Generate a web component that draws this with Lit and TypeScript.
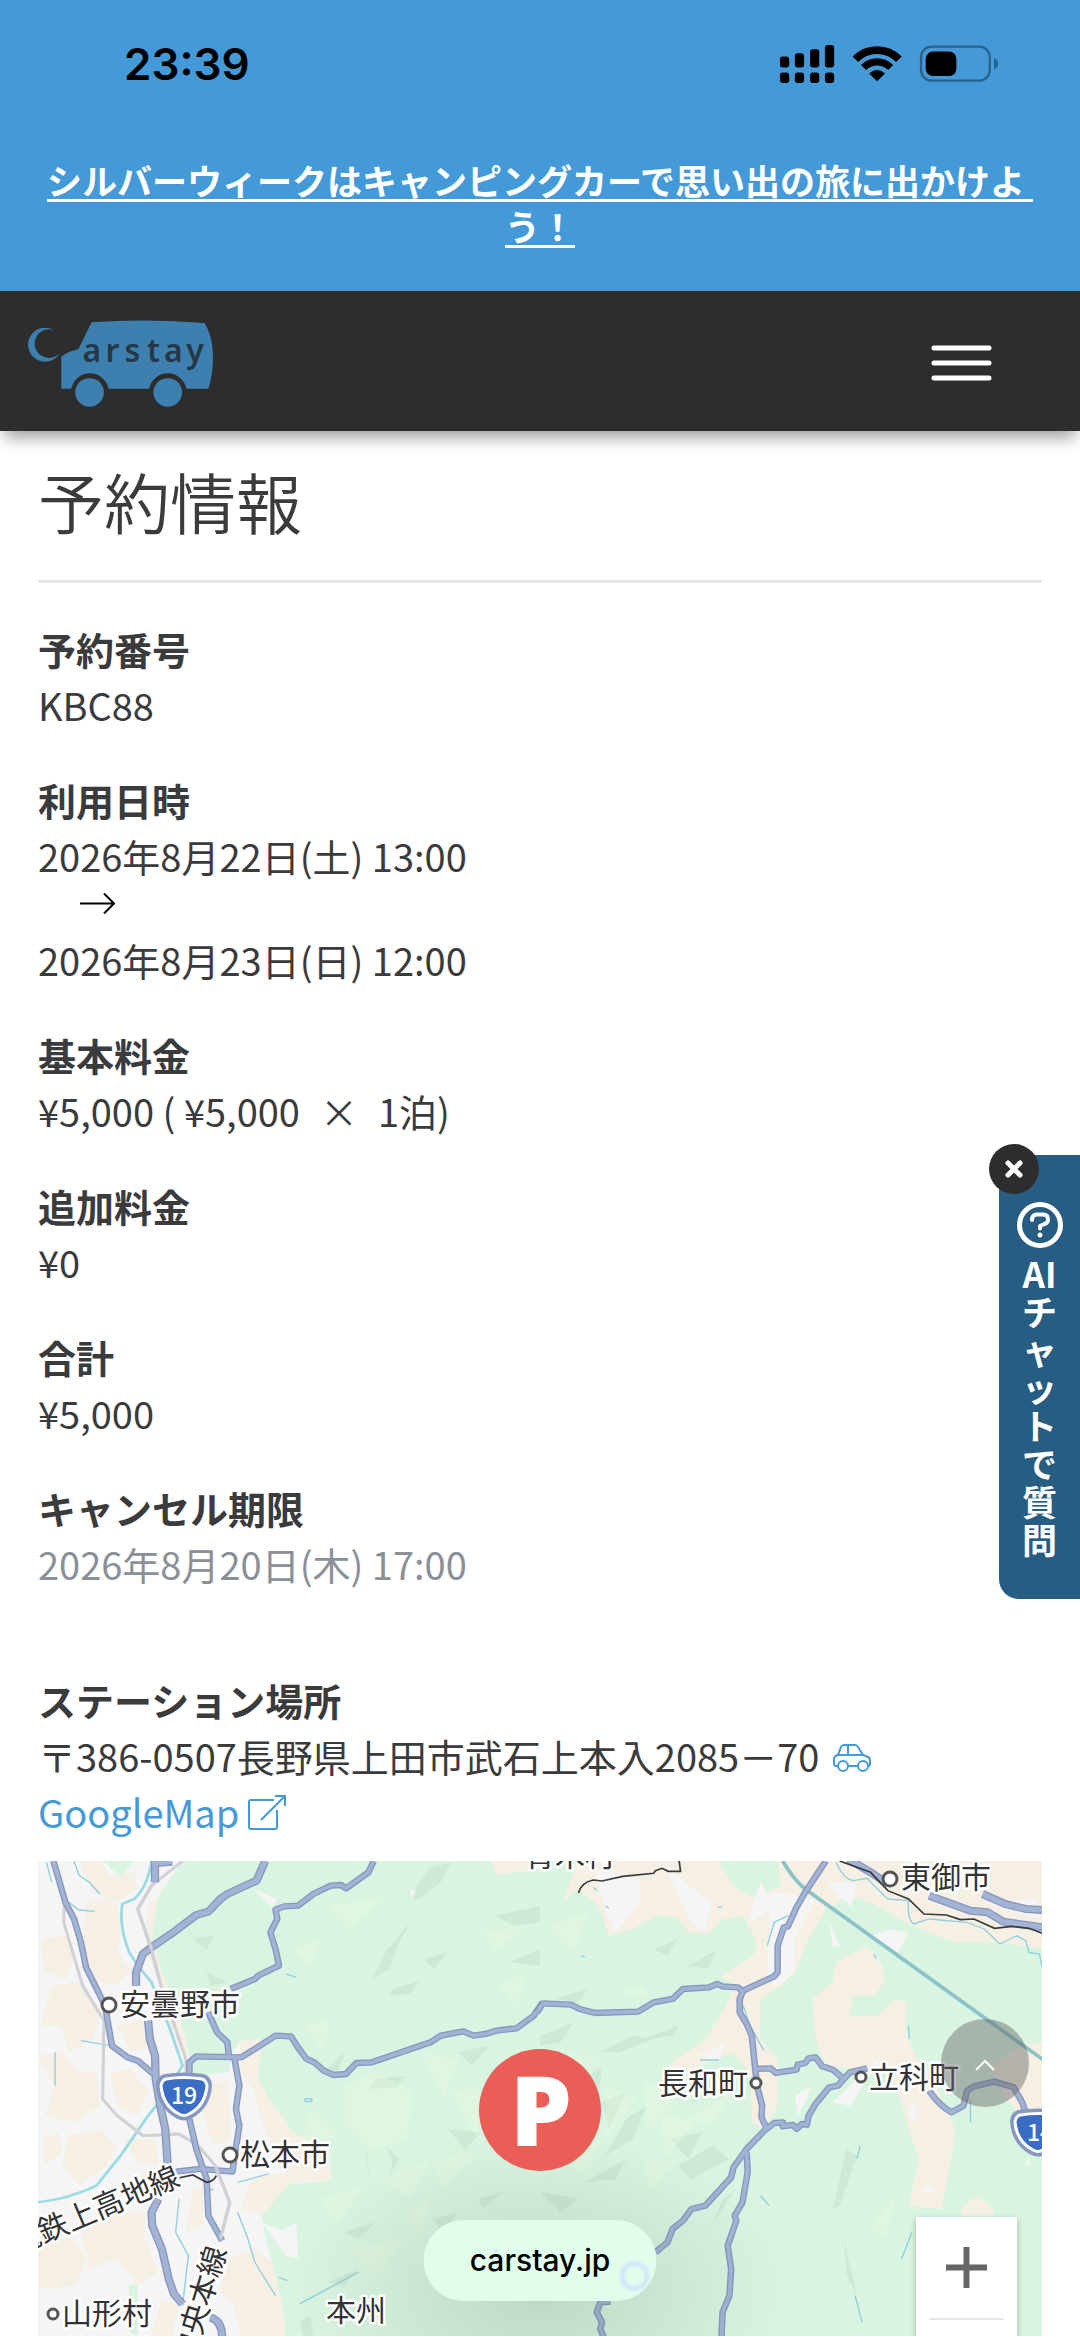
import { LitElement, html, svg, css } from 'lit';
import { customElement, property } from 'lit/decorators.js';

const RESERVATION = {
  code: 'KBC88',
  start: '2026年8月22日(土) 13:00',
  end: '2026年8月23日(日) 12:00',
  price: '¥5,000',
  nights: '1泊',
  extraPrice: '¥0',
  total: '¥5,000',
  cancelLimit: '2026年8月20日(木) 17:00',
  address: '〒386-0507長野県上田市武石上本入2085－70',
};

// Road geometry, one list per map tile
const WEST_ROADS = [
  'M155 66L190 190 215 240 235 310 250 385 305 500 325 620 370 655 400 665 445 705',
  'M1085 66L1070 100 1005 148 990 138 960 140 910 165 865 200 825 202 800 212 805 240 785 280 800 330 810 380 750 410 740 420 670 450',
  'M605 520L630 580 660 610 665 655',
  'M550 730L550 670 570 652 700 655 740 630 800 590 845 592 865 625 890 660 915 672 940 695 968 708 1005 705 1035 672 1080 670 1250 610 1280 590 1345 577 1375 590 1410 585 1440 575 1500 568 1550 530 1575 490',
  'M680 655L695 740 685 810 695 860 680 960 675 998 580 990 510 998',
  'M550 840L570 930 600 1020 605 1130 645 1205',
];
const WEST_HIGHWAYS = [
  'M770 66L745 125 660 165 640 180 605 218 570 228 510 275 440 325 415 345 395 400 395 440',
  'M430 545L435 600 450 650 452 720 465 800 480 870 487 980',
  'M460 1080L440 1120 442 1160 470 1230 490 1320 505 1365 530 1395',
  'M610 1435Q645 1445 645 1495',
  'M450 66L450 130M450 72L500 68',
];
const EAST_ROADS = [
  'M830 66L770 160 745 205 720 262 708 265 690 320 690 400 680 412 590 455 580 480 580 520 600 555 615 590 625 690 630 740 645 800 643 835 658 868 600 930 562 985 555 1015 480 1100 440 1110 415 1145 385 1170 370 1210 335 1240',
  'M600 940L603 1000 588 1090 565 1130 570 1145 545 1220 555 1290 550 1370 530 1420 527 1495',
  'M-8 520L8 493 90 497 115 510 160 522 285 518 330 490 385 480 415 450 490 445 515 435 530 442 575 445 590 460',
  'M625 690L670 688 685 702 745 692 748 677 770 672 780 658 800 655 820 682 850 692 882 720 900 700 950 688',
  'M882 720L865 740 840 745 800 795 780 830 775 858 760 855 745 870 735 858 705 862 705 850 680 852 655 872',
  'M1130 755Q1160 800 1195 820L1230 800 1240 755 1260 742 1320 728 1375 745 1400 790 1412 825',
  'M205 1388L175 1390 165 1420 180 1450 175 1470 185 1495',
];
const EAST_HIGHWAYS = [
  'M895 60L960 100 1010 135',
  'M1130 170L1250 215 1300 220 1345 248 1460 265',
  'M1285 165L1350 195 1410 210 1460 213',
];

const LABELS = [
  { text: '安曇野市', x: 82, y: 154, dotX: 71, dotY: 144, r: 7 },
  { text: '松本市', x: 202, y: 304, dotX: 192, dotY: 294, r: 7 },
  { text: '山形村', x: 24, y: 463, dotX: 15, dotY: 453, r: 5 },
  { text: '長和町', x: 620, y: 233, dotX: 718, dotY: 222, r: 5 },
  { text: '立科町', x: 831, y: 227, dotX: 823, dotY: 216, r: 5 },
  { text: '東御市', x: 863, y: 27, dotX: 852, dotY: 18, r: 7 },
];

@customElement('station-map')
export class StationMap extends LitElement {
  static styles = css`
    :host {
      display: block;
      position: relative;
      height: 475px;
      overflow: hidden;
      background: #daf4e2;
      font-family: 'Noto Sans CJK JP', sans-serif;
    }

    .canvas {
      display: block;
      width: 100%;
      height: 100%;
    }

    .plain {
      fill: #f5f5f5;
    }

    .field {
      fill: #f5efe4;
    }

    .green {
      fill: #daf4e2;
    }

    .ridge {
      fill: #bcdac6;
      opacity: 0.4;
    }

    .slope {
      fill: #e8fade;
      opacity: 0.35;
    }

    .road {
      fill: none;
      stroke: #8797bf;
      stroke-width: 19;
      stroke-linejoin: round;
    }

    .road-core {
      fill: none;
      stroke: #a3b3d4;
      stroke-width: 11;
      stroke-linejoin: round;
    }

    .highway {
      stroke-width: 24;
    }

    .highway-core {
      stroke-width: 16;
    }

    .street {
      fill: none;
      stroke: #d0d0d6;
      stroke-width: 9;
    }

    .river {
      fill: none;
      stroke: #99dbe4;
      stroke-width: 8;
    }

    .stream {
      fill: none;
      stroke: #8fd0de;
      stroke-width: 4;
    }

    .express {
      fill: none;
      stroke: #8cc3c8;
      stroke-width: 11;
    }

    .rail {
      fill: none;
      stroke: #3a3a3a;
      stroke-width: 5;
    }

    .label {
      fill: #333;
      stroke: #fff;
      stroke-width: 5px;
      stroke-linejoin: round;
      paint-order: stroke;
      font-size: 30px;
    }

    .town {
      fill: #fff;
      stroke: #555;
      stroke-width: 3;
    }

    .shield-text {
      fill: #fff;
      font-size: 23px;
      font-weight: 500;
    }

    .marker-text {
      fill: #fff;
      font-family: 'Open Sans', sans-serif;
      font-size: 98px;
      font-weight: 800;
      text-anchor: middle;
    }

    .zoom {
      position: absolute;
      top: 356px;
      right: 25px;
      width: 101px;
      background: #fff;
      box-shadow: 0 2px 6px rgba(0, 0, 0, 0.25);
    }

    .zoom button {
      display: grid;
      place-items: center;
      width: 100%;
      height: 101px;
      padding: 0;
      border: 0;
      background: none;
    }

    .zoom hr {
      margin: 0 13px;
      border: 0;
      border-top: 2px solid #e6e6e6;
    }
  `;

  _renderRoads(roads: string[], highways: string[]) {
    return svg`
      ${roads.map((d) => svg`<path class="road" d=${d} />`)}
      ${highways.map((d) => svg`<path class="road highway" d=${d} />`)}
      ${roads.map((d) => svg`<path class="road-core" d=${d} />`)}
      ${highways.map((d) => svg`<path class="road-core highway-core" d=${d} />`)}
    `;
  }

  _renderWest() {
    return svg`
      <path class="plain" d="M100 60H1570V1495H100Z" />
      <path class="field" d="M230 66H290L320 110 390 100 400 150 340 190 270 160ZM120 300L190 290 215 360 190 420 130 400ZM250 190L330 180 360 260 340 330 380 400 330 440 280 420 240 330ZM150 440L240 430 290 530 270 600 200 640 180 560 120 560ZM340 560L420 540 440 620 380 640ZM110 650L180 640 230 700 280 700 290 800 220 850 130 830 160 740ZM320 700L380 690 430 760 400 830 340 800ZM200 890L290 870 340 920 310 980 230 1040 180 980ZM130 900L170 880 180 940 130 980ZM360 900L450 900 460 980 400 970ZM230 1160L320 1130 420 1120 420 1200 460 1300 400 1340 340 1260 260 1290ZM110 1220L210 1190 250 1260 220 1340 110 1350ZM430 200L460 170 440 300 470 400 510 500 540 600 555 650 520 640 490 560 500 500 460 420 420 330ZM560 1050L590 1050 590 1160 540 1180ZM700 605L760 600 760 700 800 790 900 870 960 930 960 1025 850 1030 770 1130 700 1110 730 1020 830 1000 770 880 740 760 700 700ZM600 740L660 720 670 900 620 920 580 800ZM660 1260L740 1230 800 1280 830 1491H700L680 1400 640 1360ZM470 1380L520 1400 500 1491H440Z" />
      <path class="green" d="M530 66H1570V1495H830L820 1400 795 1290 770 1190 760 1130 840 1035 960 1025V930L850 880 820 830 780 780 750 720 760 600 700 605 672 640 665 700 560 712 540 600 510 500 470 400 440 300 460 170ZM300 66H390L350 115ZM375 1340L400 1335 400 1491 375 1480Z" />
      <path class="field" d="M1425 66H1570V90L1440 108Z" />
      <path class="plain" d="M735 150L805 180 790 205ZM760 1150L820 1175 860 1150 865 1258 830 1250ZM1190 150L1210 160 1195 170Z" />
      <path class="ridge" d="M1250 85L1310 70 1280 130 1200 190 1210 140ZM1190 250L1150 330 1130 390 1080 420 1120 340ZM1140 450L1220 425 1190 465 1130 470ZM1090 720L1180 710 1150 745 1075 750ZM1300 870L1400 880 1350 930ZM1440 230L1568 200 1568 250 1490 260ZM1480 370L1568 330 1568 380ZM1230 360L1300 340 1260 390ZM1330 640L1420 620 1370 680ZM1080 920Q1050 960 1075 1010L1060 950ZM1120 920Q1150 970 1130 1010L1160 960ZM1390 1080L1460 1060 1400 1110ZM1000 1180L1090 1150 1040 1200ZM950 1330L1040 1290 1000 1340ZM1260 1140L1330 1120 1280 1180ZM870 1450L900 1430 910 1491H880ZM950 690L1000 640 980 700ZM560 300L620 290 600 330ZM600 400L660 430 610 440Z" />
      <path class="slope" d="M1000 740L1090 700 1200 760 1180 900 1080 940 1000 860ZM1220 640L1330 660 1290 780ZM1310 760L1390 740 1390 900ZM1400 280L1530 260 1440 340ZM1450 440L1530 400 1500 500ZM900 800L980 880 900 990 880 900ZM1100 1020L1250 960 1190 1080ZM930 1080L1060 1040 980 1150ZM1250 960L1380 940 1290 1050ZM850 330L930 300 900 390ZM950 200L1120 170 1020 270ZM1180 1130L1260 1060 1220 1190ZM880 560L960 540 940 640ZM1020 1230L1170 1200 1090 1320Z" />
      <path class="river" d="M440 66Q430 140 390 180L355 195Q345 260 375 340L400 380 440 430 490 560 530 680 470 780 430 830 350 950 280 1040Q200 1080 110 1090" />
      <path class="stream" d="M215 66L230 110 260 130 290 165M180 175L230 213 275 217M135 70L150 130M520 1080L510 1180 547 1250 530 1400M600 1060L620 1050M690 1120L720 1200 740 1270 800 1370M690 1030L780 1005M160 640V740M235 605L320 620M1040 1300L870 1395M810 1315L835 1325M830 405L860 415M885 780H905V788H887Z" />
      <path class="street" d="M155 66L187 190 185 250 240 440 302 545 298 780 340 830 415 890 520 885 575 920 625 980 667 1090 640 1200M530 66L440 140 400 210 435 320 470 450M500 540L540 660V710M550 840L570 930" />
      ${this._renderRoads(WEST_ROADS, WEST_HIGHWAYS)}
      <path class="street" d="M440 140L400 210 440 330 470 450M625 980L667 1090 640 1200" />
      <path class="rail" d="M515 1018L560 1008 600 1030Q620 1028 628 1010" />
    `;
  }

  _renderEast() {
    return svg`
      <path class="field" d="M110 66H520L560 140 620 175 700 140 690 66H1460V330L1330 310 1200 310 1060 250 960 190 900 170 830 210 780 300 740 400 700 440 640 480V600L690 660V800L650 870 615 850 610 700 560 640 440 690 370 680 480 600 540 500 565 440 525 410 620 350 630 310 590 230 530 240 490 285 430 280 400 235 340 230 270 270 200 290 170 200 110 150 65 190Z" />
      <path class="field" d="M950 320L995 380 1000 430 970 468 910 470 900 530 980 530 1030 480 1065 490 1060 560 1090 650 1130 700 1205 870 1200 930 1165 1110 1070 1100 1100 960 1080 900 1040 760 1000 700 830 680 800 600 790 480 850 430 860 370ZM1310 680L1400 620 1460 610V820L1400 840 1340 760ZM1220 1120Q1260 1040 1315 1110V1130H1225Z" />
      <path class="plain" d="M160 90L290 120 290 190 220 280 190 220ZM360 66L430 140 500 190 480 275 440 250 400 170ZM670 160L800 180 740 300 740 400 690 445 660 420ZM830 130L920 130 905 205ZM840 250L870 320 850 325ZM460 650L540 610 520 670ZM640 130L680 200 600 260ZM960 290L1020 270 1070 280 1040 340ZM1190 90L1240 80 1220 140ZM1290 190L1440 180 1450 240ZM1070 820L1090 780 1095 840 1080 850ZM1110 1060L1130 1030 1150 1060ZM850 790L1000 640 900 800ZM740 770L790 740 750 830ZM1410 980L1420 950 1425 975Z" />
      <path class="ridge" d="M0 590L100 550 60 610 0 620ZM170 640L270 590 330 600 230 640ZM430 380L510 335 490 390ZM300 600L400 560 390 590ZM40 480L140 450 110 490ZM330 330L400 300 370 350ZM120 730L180 680 170 770ZM180 790L250 760 200 870ZM250 840L310 800 270 900 190 950ZM380 900L470 880 430 960ZM130 1030L250 960 220 1020ZM400 980L500 920 550 960 440 1020ZM430 800L520 700 500 760ZM30 880L80 850 40 960ZM560 1060L500 1160 530 1080ZM0 1060L110 1080 60 1120Z" />
      <path class="slope" d="M190 740L280 780 190 900ZM300 720L400 790 310 880ZM220 460L300 440 320 480ZM350 820L450 850 360 960ZM60 960L180 900 130 1010ZM420 840L560 760 500 860ZM300 960L390 970 320 1060ZM20 260L140 220 100 340ZM80 640L170 660 90 720ZM960 1160L1040 1060 1000 1200ZM870 1200L890 1230 890 1320Z" />
      <path class="ridge" d="M890 930L920 950 870 1100 850 1110ZM880 1200L905 1300 920 1370 890 1310Z" />
      <path class="stream" d="M860 70Q880 120 910 125L950 118 970 140 1010 180 1070 185Q1065 240 1085 255L1130 240 1240 250 1290 270 1335 315 1385 290 1410 305 1420 340 1450 345 1458 385M660 320L680 250 720 230M465 663H520M590 500L610 560 650 635M1070 560L1072 600M155 145L165 155M190 200L200 208M515 205L530 203M120 350L130 355M1080 1180L1050 1260M915 1370L935 1450M640 1070L665 1100M970 345L975 360M930 920L920 960M1250 780V850" />
      <path class="express" d="M705 66Q735 120 770 150L1460 662" />
      ${this._renderRoads(EAST_ROADS, EAST_HIGHWAYS)}
      <path class="rail" d="M870 66L960 100 1010 155 1070 180 1115 225 1180 228 1220 242 1260 240 1320 268 1370 262 1420 268 1460 283M112 162Q120 130 155 123L180 126 240 112 330 103 335 95 355 88 372 97H408L404 66" />
    `;
  }

  render() {
    return html`
      <svg class="canvas" viewBox="0 0 1004 475" preserveAspectRatio="xMidYMin slice" role="img" aria-label="ステーションの地図">
        <defs>
          <radialGradient id="haze">
            <stop offset="0" stop-color="#4f6b5a" stop-opacity="0.2" />
            <stop offset="1" stop-color="#4f6b5a" stop-opacity="0" />
          </radialGradient>
        </defs>
        <g transform="translate(-38 -22) scale(0.3444 0.3333)">${this._renderWest()}</g>
        <g transform="translate(502 -22) scale(0.3444 0.3333)">${this._renderEast()}</g>
        <ellipse cx="502" cy="430" rx="250" ry="160" fill="url(#haze)" />

        ${LABELS.map((l) => svg`
          <circle class="town" cx=${l.dotX} cy=${l.dotY} r=${l.r} />
          <text class="label" x=${l.x} y=${l.y}>${l.text}</text>
        `)}
        <text class="label" x="487" y="5">青木村</text>
        <text class="label" x="288" y="460">本州</text>
        <text class="label" transform="translate(-22 394) rotate(-23)">電鉄上高地線</text>
        <text class="label" transform="translate(154 504) rotate(-73)">中央本線</text>

        ${[{ x: 146, y: 236 }, { x: 1000, y: 272 }].map((s) => svg`
          <g transform="translate(${s.x} ${s.y})" fill="#3c6dc5">
            <path d="M-19 -21Q0 -24 19 -21Q25 -20 26 -12Q25 10 6 20Q0 23 -6 20Q-25 10 -26 -12Q-25 -20 -19 -21Z" stroke="#8797bf" stroke-width="4" />
            <path d="M-18 -18Q0 -21 18 -18Q22 -17 23 -11Q21 9 5 17Q0 20 -5 17Q-21 9 -23 -11Q-22 -17 -18 -18Z" stroke="#fff" stroke-width="3" />
          </g>
        `)}
        <text class="shield-text" x="133" y="243">19</text>
        <text class="shield-text" x="989" y="280">142</text>

        <circle cx="502" cy="249" r="61" fill="#ea5e57" />
        <text class="marker-text" x="503" y="285">P</text>
      </svg>

      <div class="zoom">
        <button type="button" aria-label="ズームイン">
          <svg width="41" height="41" viewBox="0 0 41 41">
            <path d="M20.5 0V41M0 20.5H41" stroke="#666" stroke-width="6" />
          </svg>
        </button>
        <hr />
        <button type="button" aria-label="ズームアウト">
          <svg width="41" height="6" viewBox="0 0 41 6"><path d="M0 3H41" stroke="#666" stroke-width="6" /></svg>
        </button>
      </div>
    `;
  }
}

@customElement('status-bar')
export class StatusBar extends LitElement {
  static styles = css`
    :host {
      display: flex;
      justify-content: space-between;
      align-items: center;
      height: 127px;
      padding: 0 81px 0 124px;
      color: #000;
      font-family: Inter, sans-serif;
      font-size: 44px;
      font-weight: 600;
    }
  `;

  @property() time = '';

  render() {
    return html`
      <span>${this.time}</span>
      <svg width="220" height="38" viewBox="114 133 660 115" aria-hidden="true">
        <rect x="114" y="168" width="28" height="33" rx="9" />
        <rect x="159" y="158" width="28" height="43" rx="9" />
        <rect x="205" y="146" width="28" height="55" rx="9" />
        <rect x="250" y="133" width="28" height="68" rx="9" />
        ${[114, 159, 205, 250].map((x) => svg`<rect x=${x} y="216" width="28" height="32" rx="9" />`)}
        <g fill="none" stroke="#000">
          <path d="M342 176A93 93 0 0 1 474 176" stroke-width="24" />
          <path d="M367 201A58 58 0 0 1 449 201" stroke-width="22" />
        </g>
        <path d="M408 240L387 219A31 31 0 0 1 429 219Z" stroke="#000" stroke-width="4" stroke-linejoin="round" />
        <rect x="541" y="138" width="208" height="103" rx="32" fill="none" stroke="#286288" stroke-width="7" />
        <rect x="555" y="153" width="93" height="74" rx="22" />
        <path d="M762 173Q774 179 774 190Q774 202 762 208Z" fill="#286288" />
      </svg>
    `;
  }
}

@customElement('app-root')
export class AppRoot extends LitElement {
  static styles = css`
    :host {
      display: block;
      position: relative;
      overflow: hidden;
      background: #fff;
      color: #3a3b3d;
      font-family: 'Noto Sans CJK JP', sans-serif;
      font-size: 38px;
      line-height: 56px;
    }

    a {
      color: #449ad8;
      text-decoration: none;
    }

    button {
      padding: 0;
      border: 0;
      background: none;
      cursor: pointer;
    }

    .top {
      background: #449ad8;
    }

    .campaign {
      display: block;
      padding: 30px 40px 42px;
      color: #fff;
      font-size: 35px;
      font-weight: 700;
      line-height: 46px;
      text-align: center;
      text-decoration: underline;
      text-decoration-thickness: 3px;
      text-underline-offset: 4px;
      text-decoration-skip-ink: none;
    }

    .navbar {
      display: flex;
      justify-content: space-between;
      align-items: center;
      box-sizing: border-box;
      height: 140px;
      padding: 4px 88px 0 28px;
      background: #2d2d2d;
      box-shadow: 0 10px 16px -4px rgba(0, 0, 0, 0.4);
    }

    .logo,
    .menu svg {
      display: block;
    }

    .logo-text {
      fill: #263845;
      font-family: 'Noto Sans', sans-serif;
      font-size: 96px;
      font-weight: 600;
    }

    main {
      padding: 21px 38px 0;
    }

    h1 {
      margin: 0;
      padding-bottom: 32px;
      border-bottom: 3px solid #e6e6e6;
      font-size: 66px;
      font-weight: 350;
      line-height: 96px;
    }

    dl {
      display: flex;
      flex-direction: column;
      gap: 39px;
      margin: 0;
      padding-top: 38px;
    }

    dt {
      font-weight: 700;
    }

    dd {
      margin: 0;
    }

    .times {
      margin: 0 20px;
    }

    .arrow {
      height: 39px;
      padding: 9px 0 0 42px;
    }

    .arrow svg {
      display: block;
    }

    .muted {
      color: #8a9097;
    }

    .station {
      padding-top: 41px;
    }

    .car {
      margin-left: 14px;
    }

    .map-link {
      display: flex;
      align-items: center;
      gap: 9px;
      width: fit-content;
    }

    station-map {
      margin-top: 21px;
    }

    .chat {
      position: absolute;
      top: 1155px;
      right: 0;
    }

    .chat-open {
      display: flex;
      flex-direction: column;
      align-items: center;
      gap: 6px;
      box-sizing: border-box;
      width: 81px;
      height: 444px;
      padding-top: 47px;
      border-radius: 0 0 0 20px;
      background: #275d83;
      color: #fff;
      font: 700 35px/38px 'Noto Sans CJK JP', sans-serif;
    }

    .chat-label {
      width: 40px;
      line-break: anywhere;
      text-align: center;
    }

    .chat-close {
      position: absolute;
      top: -11px;
      left: -10px;
      display: grid;
      place-items: center;
      width: 50px;
      height: 50px;
      border-radius: 50%;
      background: #2d2d2d;
    }

    .to-top {
      position: absolute;
      right: 51px;
      bottom: 229px;
      display: grid;
      place-items: center;
      width: 88px;
      height: 88px;
      border-radius: 50%;
      background: rgba(100, 100, 100, 0.44);
    }

    .address-pill {
      position: absolute;
      bottom: 35px;
      left: 50%;
      width: 233px;
      border-radius: 41px;
      background: radial-gradient(circle at 211px 56px, transparent 8px, #cfe6fb 12px, transparent 17px) #e1fdec;
      color: #000;
      font: 500 30px/81px Inter, sans-serif;
      text-align: center;
      transform: translateX(-50%);
    }
  `;

  _renderLogo() {
    return html`
      <svg class="logo" width="185" height="87" viewBox="24 30 556 260" fill="#3d80b0">
        <path d="M102 60A51 51 0 1 0 120 128A43 43 0 1 1 102 60Z" />
        <path d="M215 36Q385 24 555 38Q580 80 580 140Q580 195 566 236H500A57 57 0 0 0 388 236H266A57 57 0 0 0 154 236H124V140Q145 122 175 118Z" />
        <circle cx="209" cy="247" r="43" />
        <circle cx="444" cy="247" r="43" />
        <text class="logo-text" x="188 257 314 382 433 500" y="156">arstay</text>
      </svg>
    `;
  }

  render() {
    return html`
      <div class="top">
        <status-bar time="23:39"></status-bar>
        <a class="campaign" href="#">シルバーウィークはキャンピングカーで思い出の旅に出かけよ&nbsp;<wbr>う！</a>
      </div>

      <nav class="navbar">
        <a href="#" aria-label="Carstay">${this._renderLogo()}</a>
        <button class="menu" type="button" aria-label="メニュー">
          <svg width="61" height="36" viewBox="0 0 61 36">
            <path d="M3 3H58M3 18H58M3 33H58" stroke="#fff" stroke-width="5" stroke-linecap="round" />
          </svg>
        </button>
      </nav>

      <main>
        <h1>予約情報</h1>
        <dl>
          <div>
            <dt>予約番号</dt>
            <dd>${RESERVATION.code}</dd>
          </div>
          <div>
            <dt>利用日時</dt>
            <dd>${RESERVATION.start}</dd>
            <dd class="arrow">
              <svg width="35" height="21" viewBox="0 0 35 21" fill="none" stroke="#000" stroke-width="2">
                <path d="M0 10.5H34M24 0.5L34 10.5L24 20.5" />
              </svg>
            </dd>
            <dd>${RESERVATION.end}</dd>
          </div>
          <div>
            <dt>基本料金</dt>
            <dd>${RESERVATION.price} ( ${RESERVATION.price}<span class="times">×</span>${RESERVATION.nights})</dd>
          </div>
          <div>
            <dt>追加料金</dt>
            <dd>${RESERVATION.extraPrice}</dd>
          </div>
          <div>
            <dt>合計</dt>
            <dd>${RESERVATION.total}</dd>
          </div>
          <div>
            <dt>キャンセル期限</dt>
            <dd class="muted">${RESERVATION.cancelLimit}</dd>
          </div>
          <div class="station">
            <dt>ステーション場所</dt>
            <dd>
              ${RESERVATION.address}<svg class="car" width="38" height="28" viewBox="0 0 38 28" fill="none" stroke="#449ad8" stroke-width="2">
                <path d="M5 22H3Q1 22 1 20V15Q1 12 5 11L8 3Q9 1 11 1H22Q24 1 25 3L30 11L35 13Q37 14 37 16V20Q37 22 35 22M15 22H25M5 11H30M15 1V11" />
                <circle cx="10" cy="22" r="5" />
                <circle cx="30" cy="22" r="5" />
              </svg>
            </dd>
            <dd>
              <a class="map-link" href="#">
                GoogleMap
                <svg width="38" height="35" viewBox="0 0 38 35" fill="none" stroke="#449ad8" stroke-width="2">
                  <path d="M26 5H3Q1 5 1 7V32Q1 34 3 34H27Q29 34 29 32V15M13 25L36 2M27 1H37V11" />
                </svg>
              </a>
            </dd>
          </div>
        </dl>
        <station-map></station-map>
      </main>

      <div class="chat">
        <button class="chat-open" type="button">
          <svg width="46" height="46" viewBox="0 0 46 46" fill="none" stroke="#fff" stroke-linecap="round">
            <circle cx="23" cy="23" r="20.5" stroke-width="5" />
            <path d="M15 18Q15 12.500 20 12.500H26Q31 12.500 31 17.500Q31 21 27.500 22L23 24V26.500" stroke-width="4" stroke-linejoin="round" />
            <circle cx="23" cy="33" r="2.500" fill="#fff" stroke="none" />
          </svg>
          <span class="chat-label">AIチャットで質問</span>
        </button>
        <button class="chat-close" type="button" aria-label="閉じる">
          <svg width="18" height="18" viewBox="0 0 18 18">
            <path d="M3 3L15 15M15 3L3 15" stroke="#fff" stroke-width="5" stroke-linecap="round" />
          </svg>
        </button>
      </div>

      <button class="to-top" type="button" aria-label="ページの先頭へ">
        <svg width="20" height="28" viewBox="0 0 20 28">
          <path d="M1 21L10 12L19 21" fill="none" stroke="#fff" stroke-width="2" />
        </svg>
      </button>
      <div class="address-pill">carstay.jp</div>
    `;
  }
}
